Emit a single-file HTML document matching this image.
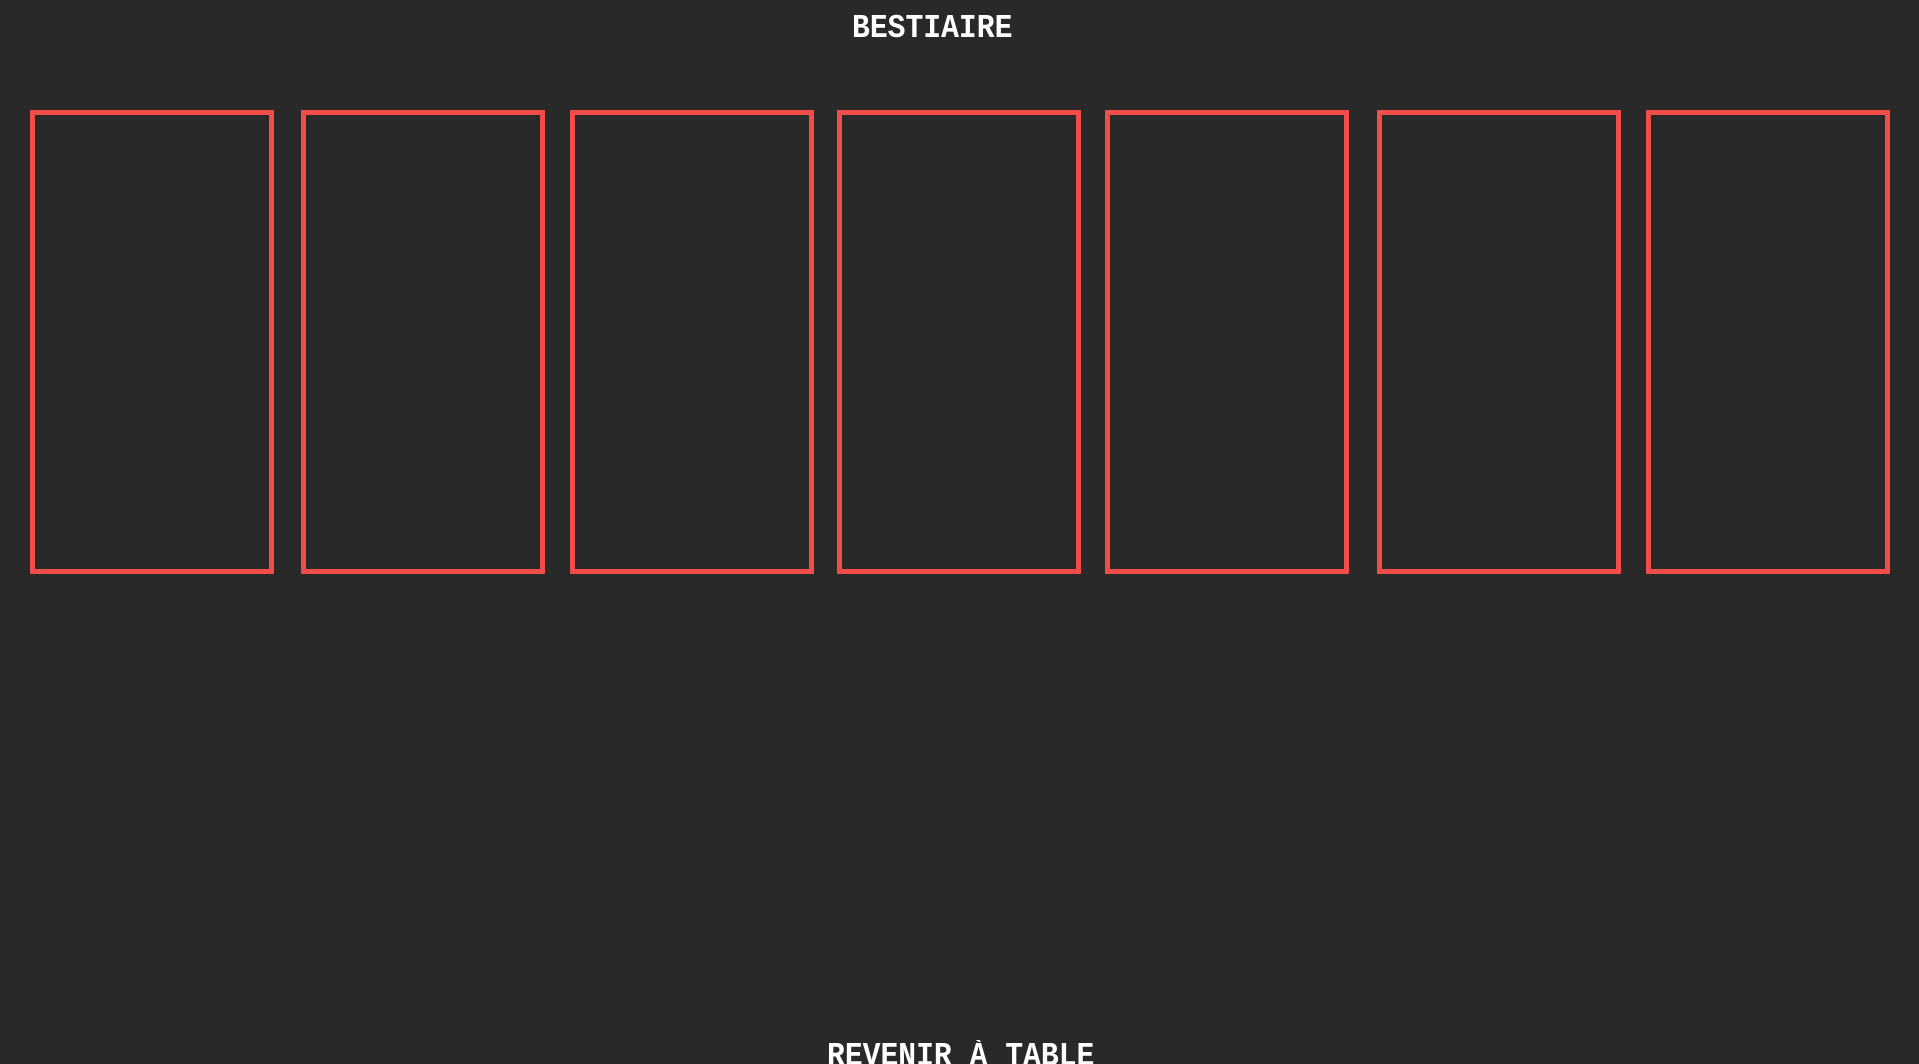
<!DOCTYPE html>
<html><head><meta charset="utf-8"><style>
html,body{margin:0;padding:0;width:1919px;height:1064px;overflow:hidden;}
body{background:#292929;position:relative;font-family:"Liberation Mono",monospace;font-weight:bold;color:#fff;}
.t{position:absolute;font-size:33px;line-height:33px;white-space:nowrap;transform-origin:0 0;transform:scaleX(0.9);}
.c{position:absolute;top:110px;width:234px;height:454px;border:5px solid #f24d48;border-radius:1px;}
</style></head><body>
<div class="t" style="left:852px;top:12px;">BESTIAIRE</div>
<div class="c" style="left:30px"></div>
<div class="c" style="left:301px"></div>
<div class="c" style="left:570px"></div>
<div class="c" style="left:837px"></div>
<div class="c" style="left:1105px"></div>
<div class="c" style="left:1377px"></div>
<div class="c" style="left:1646px"></div>
<div class="t" style="left:827px;top:1040px;height:24px;overflow:hidden;">REVENIR À TABLE</div>
</body></html>
